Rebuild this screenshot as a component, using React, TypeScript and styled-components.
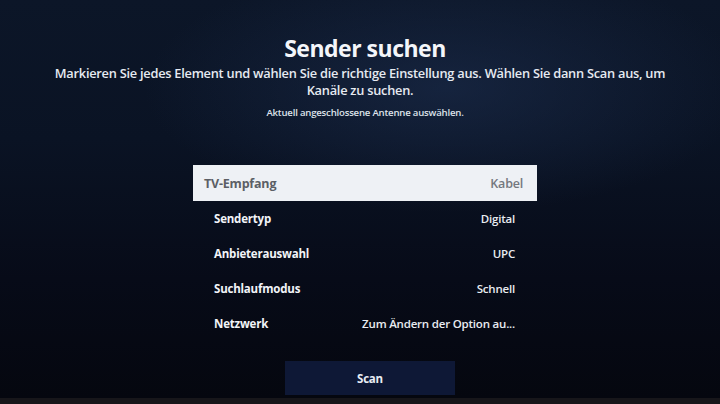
import React from "react";
import styled, { createGlobalStyle } from "styled-components";

const Global = createGlobalStyle`
  html, body { margin: 0; padding: 0; width: 720px; height: 404px; overflow: hidden; }
  body { font-family: "Open Sans", "Noto Sans", sans-serif; }
  #root { width: 720px; height: 404px; }
`;

const Screen = styled.div`
  width: 720px;
  height: 404px;
  box-sizing: border-box;
  display: flex;
  flex-direction: column;
  align-items: center;
  padding-left: 10px;
  background:
    radial-gradient(ellipse 60% 45% at 62% 22%, rgba(30, 48, 82, 0.55), rgba(0,0,0,0) 70%),
    linear-gradient(180deg, #0c1628 0%, #0a1324 35%, #070b18 70%, #05070f 100%);
  color: #f2f4f8;
  border-bottom: 6px solid #17161a;
`;

const Title = styled.h1`
  margin: 33px 0 0;
  font-size: 23px;
  line-height: 30px;
  font-weight: 700;
  letter-spacing: -0.5px;
  color: #f4f6fa;
`;

const Subtitle = styled.p`
  margin: 2px 0 0 -10px;
  width: 640px;
  text-align: center;
  font-size: 12.8px;
  line-height: 17px;
  font-weight: 600;
  letter-spacing: -0.25px;
  color: #e6eaf1;
`;

const Note = styled.p`
  margin: 8px 0 0;
  font-size: 9.6px;
  line-height: 12px;
  font-weight: 600;
  letter-spacing: -0.2px;
  color: #dde2ea;
`;

const List = styled.div`
  margin-top: 46px;
  width: 344px;
  display: flex;
  flex-direction: column;
`;

const Row = styled.div<{ $focused?: boolean }>`
  height: ${(p) => (p.$focused ? 36 : 35)}px;
  box-sizing: border-box;
  display: flex;
  align-items: center;
  justify-content: space-between;
  padding: ${(p) => (p.$focused ? "0 14px 0 11px" : "0 22px 0 21px")};
  background: ${(p) => (p.$focused ? "#eef1f5" : "transparent")};
  font-size: ${(p) => (p.$focused ? 12.5 : 11.5)}px;
  font-weight: 700;
  letter-spacing: -0.2px;
  color: ${(p) => (p.$focused ? "#5b5f65" : "#f2f4f8")};
`;

const Label = styled.span``;

const Value = styled.span<{ $focused?: boolean }>`
  font-weight: 600;
  color: ${(p) => (p.$focused ? "#74787e" : "#e9ecf1")};
`;

const ScanButton = styled.button`
  margin: 20px 0 0 10px;
  width: 170px;
  height: 34px;
  border: none;
  background: #0e1836;
  color: #e8ecf4;
  font-family: "Open Sans", "Noto Sans", sans-serif;
  font-size: 11.5px;
  font-weight: 700;
  letter-spacing: -0.2px;
`;

const rows = [
  { label: "TV-Empfang", value: "Kabel", focused: true },
  { label: "Sendertyp", value: "Digital" },
  { label: "Anbieterauswahl", value: "UPC" },
  { label: "Suchlaufmodus", value: "Schnell" },
  { label: "Netzwerk", value: "Zum Ändern der Option au..." },
];

export default function App() {
  return (
    <>
      <Global />
      <Screen>
        <Title>Sender suchen</Title>
        <Subtitle>
          Markieren Sie jedes Element und wählen Sie die richtige Einstellung aus. Wählen Sie dann Scan aus, um Kanäle zu suchen.
        </Subtitle>
        <Note>Aktuell angeschlossene Antenne auswählen.</Note>
        <List>
          {rows.map((r) => (
            <Row key={r.label} $focused={r.focused}>
              <Label>{r.label}</Label>
              <Value $focused={r.focused}>{r.value}</Value>
            </Row>
          ))}
        </List>
        <ScanButton>Scan</ScanButton>
      </Screen>
    </>
  );
}
